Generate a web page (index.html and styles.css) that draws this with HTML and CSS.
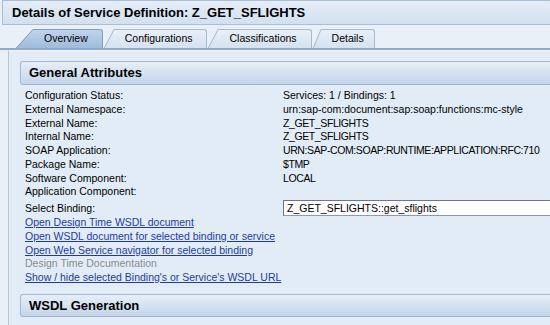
FILE: index.html
```html
<!DOCTYPE html>
<html lang="en">
<head>
  <meta charset="UTF-8">
  <title>Details of Service Definition</title>
  <link rel="stylesheet" href="styles.css">
</head>
<body>
  <svg class="defs" width="0" height="0">
    <defs>
      <linearGradient id="tabOn" x1="0" y1="0" x2="0" y2="1">
        <stop offset="0" stop-color="#c0d4ea"/>
        <stop offset="1" stop-color="#9fbbdb"/>
      </linearGradient>
      <linearGradient id="tabOff" x1="0" y1="0" x2="0" y2="1">
        <stop offset="0" stop-color="#e8eff7"/>
        <stop offset="1" stop-color="#d5e2f0"/>
      </linearGradient>
    </defs>
  </svg>
  <div class="page">
    <div class="titlebar">Details of Service Definition: Z_GET_SFLIGHTS</div>

    <div class="tabstrip">
      <div class="tab selected">
        <svg class="slant" width="17" height="19" viewBox="0 0 17 19">
          <path d="M0 19 L17 0 L17 19 Z" fill="url(#tabOn)"/>
          <path d="M0.3 19 L17 0.5" stroke="#7f9dc3" fill="none"/>
        </svg>
        <span class="tab-label">Overview</span>
      </div>
      <div class="tab">
        <svg class="slant" width="10" height="19" viewBox="0 0 10 19">
          <path d="M0 19 L10 0 L10 19 Z" fill="url(#tabOff)"/>
          <path d="M0.3 19 L10 0.5" stroke="#a5b9d1" fill="none"/>
        </svg>
        <span class="tab-label">Configurations</span>
      </div>
      <div class="tab">
        <svg class="slant" width="10" height="19" viewBox="0 0 10 19">
          <path d="M0 19 L10 0 L10 19 Z" fill="url(#tabOff)"/>
          <path d="M0.3 19 L10 0.5" stroke="#a5b9d1" fill="none"/>
        </svg>
        <span class="tab-label">Classifications</span>
      </div>
      <div class="tab last">
        <svg class="slant" width="8" height="19" viewBox="0 0 8 19">
          <path d="M0 19 L8 0 L8 19 Z" fill="url(#tabOff)"/>
          <path d="M0.3 19 L8 0.5" stroke="#a5b9d1" fill="none"/>
        </svg>
        <span class="tab-label">Details</span>
      </div>
    </div>

    <div class="panel">
      <div class="section-head">General Attributes</div>
      <div class="attrs">
        <div>Configuration Status:</div><div>Services: 1 / Bindings: 1</div>
        <div>External Namespace:</div><div>urn:sap-com:document:sap:soap:functions:mc-style</div>
        <div>External Name:</div><div class="caps">Z_GET_SFLIGHTS</div>
        <div>Internal Name:</div><div class="caps">Z_GET_SFLIGHTS</div>
        <div>SOAP Application:</div><div class="caps">URN:SAP-COM:SOAP:RUNTIME:APPLICATION:RFC:710</div>
        <div>Package Name:</div><div class="caps">$TMP</div>
        <div>Software Component:</div><div class="caps">LOCAL</div>
        <div>Application Component:</div><div></div>
        <div class="binding-label">Select Binding:</div>
        <div class="select">Z_GET_SFLIGHTS::get_sflights</div>
      </div>
      <div class="links">
        <a href="#">Open Design Time WSDL document</a>
        <a href="#">Open WSDL document for selected binding or service</a>
        <a href="#">Open Web Service navigator for selected binding</a>
        <span class="disabled">Design Time Documentation</span>
        <a href="#">Show / hide selected Binding's or Service's WSDL URL</a>
      </div>
      <div class="section-head gap">WSDL Generation</div>
    </div>
  </div>
</body>
</html>
```

FILE: styles.css
```css
* {
  box-sizing: border-box;
}
html, body {
  margin: 0;
}
body {
  height: 325px;
  overflow: hidden;
  background: #e9f0f8;
  font-family: "Liberation Sans", Arial, sans-serif;
  font-size: 10.5px;
  color: #000;
}
.defs {
  display: block;
}
.page {
  display: flex;
  flex-direction: column;
  height: 100%;
}

/* title */
.titlebar {
  height: 25px;
  margin-left: 2px;
  padding-left: 9px;
  line-height: 23px;
  font-size: 13px;
  font-weight: bold;
  background: linear-gradient(#e5edf7, #d2e0ef);
  border: 1px solid #a9bdd5;
  border-right: none;
}

/* tabs */
.tabstrip {
  display: flex;
  align-items: flex-end;
  gap: 1px;
  padding: 4px 0 0 16px;
  border-bottom: 2px solid #8eaad0;
}
.tab {
  display: flex;
  height: 19px;
}
.slant {
  display: block;
  flex: none;
}
.tab-label {
  padding: 0 14px 0 11px;
  line-height: 16px;
  border-top: 1px solid #a5b9d1;
  border-right: 1px solid #a5b9d1;
  border-radius: 0 3px 0 0;
  background: linear-gradient(#e8eff7, #d5e2f0);
}
.tab.selected .tab-label {
  background: linear-gradient(#c0d4ea, #9fbbdb);
  border-color: #7f9dc3;
}
.tab.last .tab-label {
  padding: 0 10px 0 11px;
}

/* content */
.panel {
  flex: 1;
  margin-left: 8px;
  padding: 10px 0 0 11px;
  background: #e2ecf6;
  border-left: 1px solid #b4c6da;
  border-top: 1px solid #f2f6fb;
}
.section-head {
  height: 24px;
  padding-left: 8px;
  line-height: 22px;
  font-size: 13px;
  font-weight: bold;
  background: linear-gradient(#e7eef7, #c4d6ea);
  border: 1px solid #a0b8d3;
  border-right: none;
  border-radius: 3px 0 0 3px;
}
.section-head.gap {
  height: 23px;
  line-height: 21px;
  margin-top: 9px;
}
.attrs {
  display: grid;
  grid-template-columns: 258px 1fr;
  padding: 4px 0 0 5px;
  line-height: 13.75px;
  white-space: nowrap;
}
.caps {
  letter-spacing: -0.4px;
}
.binding-label {
  align-self: end;
}
.select {
  height: 16px;
  margin: 1px -4px 0 0;
  padding-left: 3px;
  line-height: 14px;
  background: #fff;
  border: 1px solid #8d99a6;
  border-top-color: #6b7785;
  border-left-color: #6b7785;
}
.links {
  padding-left: 5px;
  line-height: 13.75px;
}
.links a,
.links span {
  display: block;
  width: max-content;
}
.links a {
  color: #1d3c9d;
  text-decoration: underline;
}
.links .disabled {
  color: #8c8c8c;
}
```
